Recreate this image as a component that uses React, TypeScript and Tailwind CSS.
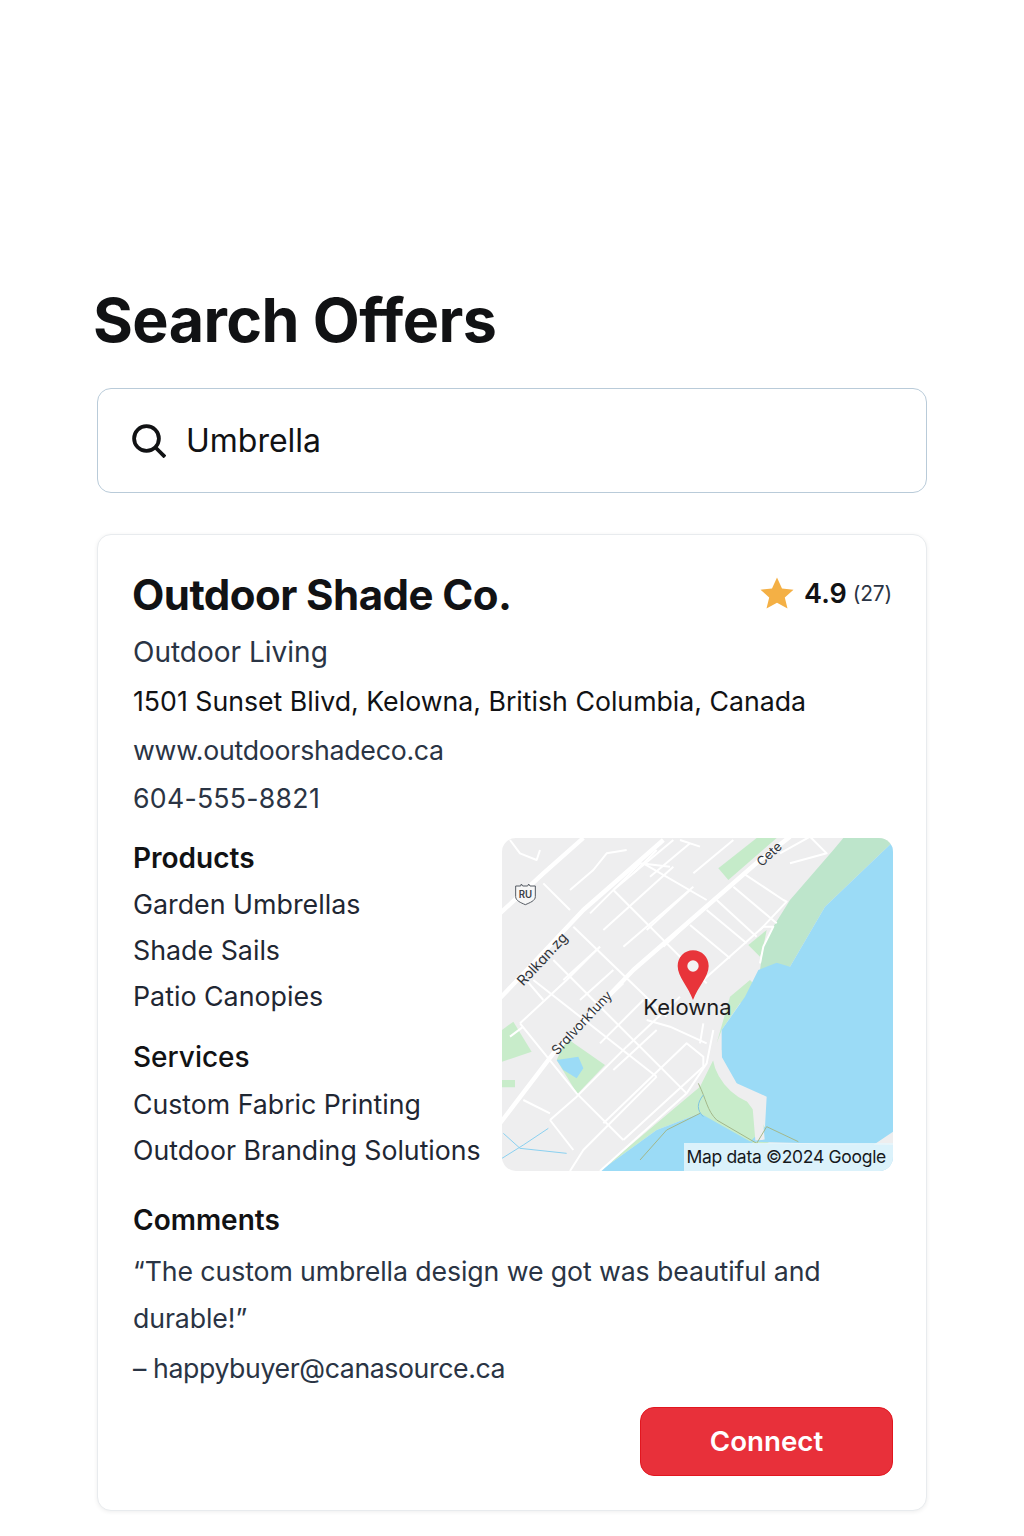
import React from 'react';

// street lines, in the map's own coordinates
const majorRoads = [
  'M0 505 L250 240 L490 30',
  'M0 880 L160 670 L400 420 L780 90 L870 20',
  'M0 250 L130 130 L250 24',
];

const minorRoads = [
  'M340 180 L520 30',
  'M270 250 L420 100 L510 110',
  'M310 300 L520 110',
  'M370 350 L580 170',
  'M440 300 L570 180',
  'M490 350 L640 210',
  'M570 285 L690 385',
  'M620 240 L740 340',
  'M650 210 L770 320',
  'M700 170 L830 280',
  'M730 130 L850 210 L860 215 L780 300',
  'M610 450 L790 290 L820 290 L790 350 L780 400',
  'M220 290 L500 560',
  'M160 390 L560 790',
  'M100 450 L470 740',
  'M60 580 L230 790 L370 930',
  'M340 180 L620 460',
  'M430 100 L620 210',
  'M380 650 L540 500',
  'M240 510 L340 420',
  'M190 450 L300 350',
  'M150 870 L230 800 L380 650',
  'M310 880 L560 640 L610 680 L610 710 L370 930',
  'M210 1023 L250 960 L470 740',
  'M150 870 L220 960',
  'M70 810 L150 850',
  'M30 620 L70 590',
  'M580 130 L700 30',
  'M540 30 L600 50',
  'M840 70 L930 20 L980 70 L870 100',
  'M130 160 L210 240',
  'M210 180 L280 120 L320 70 L380 60',
  'M30 30 L60 70 L110 90 L120 60',
  'M610 580 L600 640',
  'M440 570 L510 590 L620 640',
  // denser blocks of the grid
  'M60 580 L200 450 L300 350',
  'M235 590 L370 460',
  'M300 640 L430 510',
  'M400 130 L470 60',
  'M450 140 L570 40',
  'M70 440 L130 510',
  'M340 720 L470 600',
];

function ShopMap() {
  return (
    <div className="relative h-[333px] w-[391px] shrink-0 overflow-hidden rounded-[14px] bg-[#eeeeef]">
      <svg viewBox="6 24 1173 999" className="block h-full w-full">
        {/* parks */}
        <path d="M1030 24 L1165 24 L1179 35 L975 230 L870 410 L780 420 L790 350 L820 290 L870 210 L1000 60 Z" fill="#bde5cb" />
        <path d="M745 345 L800 300 L790 350 L780 380 Z" fill="#c5ebc9" />
        <path d="M655 115 L770 24 L830 24 L685 150 Z" fill="#c5ebc9" />
        <path d="M6 600 L40 575 L95 665 L6 695 Z" fill="#c8ecca" />
        <path d="M6 750 L45 750 L45 772 L6 772 Z" fill="#c8ecca" />
        <path d="M200 625 L315 705 L232 792 L170 690 Z" fill="#c8ecca" />
        <path d="M300 1023 L600 770 L640 690 L700 760 L760 840 L820 930 L760 960 L600 850 L470 900 L300 1023 Z" fill="#c8ecca" />
        <path d="M690 500 L750 450 L785 485 L720 520 L665 600 L650 640 Z" fill="#c8ecca" />
        {/* water */}
        <path d="M1179 35 L975 230 L870 410 L830 398 L775 420 L735 500 L665 600 L665 680 L710 760 L800 800 L795 890 L750 935 L1120 945 L1179 905 Z" fill="#9bdbf6" />
        <path d="M300 1023 L470 900 L600 850 L760 940 L1179 945 L1179 1023 Z" fill="#9bdbf6" />
        <path d="M170 690 L235 680 L250 715 L230 745 L190 720 Z" fill="#9bdbf6" />
        {/* streets */}
        {minorRoads.map((d, i) => (
          <path key={i} d={d} fill="none" stroke="#ffffff" strokeWidth="6" strokeLinejoin="round" />
        ))}
        {majorRoads.map((d, i) => (
          <path key={i} d={d} fill="none" stroke="#ffffff" strokeWidth="13" strokeLinejoin="round" />
        ))}
        <path d="M640 600 L620 700 L560 790 L300 1023" fill="none" stroke="#ffffff" strokeWidth="6" />
        <path d="M650 660 C 650 730 700 790 770 810 L780 930" fill="none" stroke="#eeeeef" strokeWidth="28" />
        {/* creek and trails */}
        <path d="M6 985 L70 945 L145 895 M10 910 L60 955 L200 970" fill="none" stroke="#8ad0f0" strokeWidth="3" />
        <path d="M595 760 C 620 810 620 840 650 870 L770 940 L800 890 L895 935 M600 850 L500 900 L420 990" fill="none" stroke="#a3b78a" strokeWidth="3" />
        <path d="M610 795 C 590 820 590 840 610 860" fill="none" stroke="#7fc4e0" strokeWidth="3" />
        {/* highway shield */}
        <path d="M47 168 L62 168 L64 162 L68 168 L83 168 L86 162 L90 168 L106 168 L106 200 C 106 212 90 218 76 224 C 62 218 47 212 47 200 Z" fill="#f7f7f7" stroke="#555b63" strokeWidth="3" />
        <text x="76" y="204" textAnchor="middle" fontFamily="Inter, sans-serif" fontSize="29" fontWeight="600" fill="#3a4047">RU</text>
        {/* labels */}
        <g fontFamily="Inter, sans-serif" fontSize="43" fill="#30343a">
          <text transform="translate(70 470) rotate(-47)">Rɔlkɑn.zg</text>
          <text transform="translate(172 677) rotate(-47)" fontSize="40">Srɑlvork1uny</text>
          <text transform="translate(785 112) rotate(-43)" fontSize="39">Cete</text>
        </g>
        <text x="430" y="556" fontFamily="Inter, sans-serif" fontSize="66" fill="#1c1c1e">Kelowna</text>
        {/* pin */}
        <path d="M579 510 C 565 470 533 440 533 408 C 533 381 554 361 579 361 C 605 361 626 381 626 408 C 626 440 594 470 579 510 Z" fill="#e8343a" />
        <circle cx="579" cy="408" r="17" fill="#f3f3f3" />
      </svg>
      <div className="absolute right-0 bottom-0 flex h-[28px] w-[209px] items-center justify-end bg-[#e6f6fc]/85 pr-[7px] font-['Inter',sans-serif] text-[17.5px] tracking-[-0.3px] whitespace-nowrap text-[#17191c]">
        Map data ©2024 Google
      </div>
    </div>
  );
}

function SearchIcon() {
  return (
    <svg viewBox="0 0 34 34" className="h-[34px] w-[34px]" fill="none" stroke="#111214" strokeWidth="3.8">
      <circle cx="14.5" cy="14.5" r="12.4" />
      <path d="M23.5 23.5 L33 33" />
    </svg>
  );
}

function Star() {
  return (
    <svg viewBox="0 0 34 32" className="mb-[5px] h-[32px] w-[34px]">
      <path d="M17 0.5 L22 11.5 L33.5 12.7 L24.8 20.5 L27.5 31.5 L17 25.7 L6.5 31.5 L9.2 20.5 L0.5 12.7 L12 11.5 Z" fill="#f4b045" />
    </svg>
  );
}

export default function App() {
  return (
    <div className="min-h-[1536px] bg-white px-[97px] pt-[284px] font-['Inter',sans-serif] text-[#111214]">
      <h1 className="ml-[-4px] text-[61px] leading-[72px] font-bold tracking-[-0.6px]">Search Offers</h1>

      <div className="mt-[32px] flex h-[105px] items-center gap-[20px] rounded-[14px] border border-[#b9cbd9] bg-white pl-[34px]">
        <SearchIcon />
        <span className="text-[32px]">Umbrella</span>
      </div>

      <div className="mt-[41px] h-[977px] rounded-[14px] border border-[#e8ebee] bg-white pt-[30px] pr-[33px] pl-[35px] shadow-[0_1px_4px_rgba(0,0,0,0.07)]">
        <div className="flex items-center justify-between">
          <h2 className="ml-[-1px] text-[42px] leading-[60px] font-bold tracking-[-0.55px]">Outdoor Shade Co.</h2>
          <div className="mr-[1px] flex items-center">
            <Star />
            <span className="mb-[2px] ml-[10px] text-[27px] font-semibold">4.9</span>
            <span className="mb-[2px] ml-[6px] text-[21px] tracking-[-0.2px] text-[#2a3444]">(27)</span>
          </div>
        </div>

        <p className="mt-[3px] text-[28px] leading-[49px] text-[#2a3444]">Outdoor Living</p>
        <p className="text-[26.7px] leading-[49px]">1501 Sunset Blivd, Kelowna, British Columbia, Canada</p>
        <p className="text-[26.7px] leading-[48px] tracking-[-0.25px] text-[#2a3444]">www.outdoorshadeco.ca</p>
        <p className="text-[26.7px] leading-[49px] tracking-[0.25px] text-[#2a3444]">604-555-8821</p>

        <div className="mt-[15px] flex justify-between">
          <div>
            <h3 className="text-[28px] leading-[40px] font-semibold">Products</h3>
            <ul className="mt-[3px] text-[26.8px] leading-[46px] text-[#1f2733]">
              <li>Garden Umbrellas</li>
              <li>Shade Sails</li>
              <li>Patio Canopies</li>
            </ul>
            <h3 className="mt-[18px] text-[28px] leading-[40px] font-medium">Services</h3>
            <ul className="mt-[4px] text-[26.7px] leading-[46px] text-[#1f2733]">
              <li>Custom Fabric Printing</li>
              <li>Outdoor Branding Solutions</li>
            </ul>
          </div>
          <ShopMap />
        </div>

        <h3 className="mt-[27px] text-[28px] leading-[40px] font-semibold">Comments</h3>
        <p className="mt-[8px] text-[26.7px] leading-[47px] tracking-[-0.1px] text-[#2a3444]">
          “The custom umbrella design we got was beautiful and<br />durable!”
        </p>
        <p className="mt-[1px] text-[26.7px] leading-[50px] tracking-[-0.4px] text-[#2a3444]">– happybuyer@canasource.ca</p>

        <div className="mt-[14px] flex justify-end">
          <button className="h-[69px] w-[253px] rounded-[14px] border border-[#e2161f] bg-[#e8303a] text-[27.7px] font-semibold text-white">
            Connect
          </button>
        </div>
      </div>
    </div>
  );
}
